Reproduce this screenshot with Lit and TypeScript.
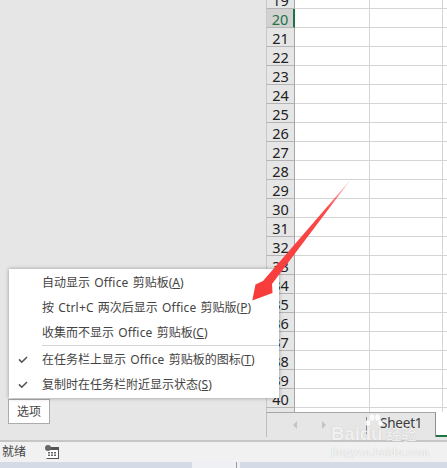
import { LitElement, html, css, svg } from "lit";
import { customElement } from "lit/decorators.js";

const rows = Array.from({ length: 22 }, (_, i) => 19 + i);

const items = [
  { pre: "自动显示 Office 剪贴板(", key: "A", check: false },
  { pre: "按 Ctrl+C 两次后显示 Office 剪贴版(", key: "P", check: false },
  { pre: "收集而不显示 Office 剪贴板(", key: "C", check: false },
  { sep: true },
  { pre: "在任务栏上显示 Office 剪贴板的图标(", key: "T", check: true },
  { pre: "复制时在任务栏附近显示状态(", key: "S", check: true },
];

const latin = (s: string) =>
  s.split(/([A-Za-z+]+)/).map((p, i) => (i % 2 ? html`<span class="lat">${p}</span>` : p));

const checkIcon = svg`<svg class="check" width="10" height="8" viewBox="0 0 10 8"><path d="M1 3.4 L3.8 6.2 L9 1" fill="none" stroke="#555" stroke-width="1.6"/></svg>`;

@customElement("app-root")
export class AppRoot extends LitElement {
  static styles = css`
    :host {
      display: block;
      width: 447px;
      height: 468px;
      position: relative;
      overflow: hidden;
      font-family: "Noto Sans", "Noto Sans CJK SC", sans-serif;
      font-size: 12px;
      color: #444;
      background: #e6e6e6;
    }
    .main {
      display: flex;
      height: 440px;
      overflow: hidden;
    }
    .pane {
      width: 266px;
      flex: none;
      box-sizing: border-box;
      background: #e6e6e6;
      padding: 399px 0 0 8px;
    }
    .options {
      width: 42px;
      height: 25px;
      box-sizing: border-box;
      border: 1px solid #ababab;
      background: #fff;
      display: flex;
      align-items: center;
      justify-content: center;
      line-height: 1;
    }
    .right {
      flex: 1;
      min-width: 0;
      display: flex;
      flex-direction: column;
    }
    .grid {
      height: 412px;
      overflow: hidden;
      flex: none;
      background: #fff;
    }
    .sheet {
      margin-top: -10px;
    }
    .row {
      display: flex;
      height: 19px;
      box-sizing: border-box;
    }
    .head {
      width: 29px;
      flex: none;
      box-sizing: border-box;
      background: #e6e6e6;
      border-left: 1px solid #c9c9c9;
      border-right: 1px solid #a6a6a6;
      border-bottom: 1px solid #b4b4b4;
      font-family: "Noto Sans", sans-serif;
      font-size: 14.5px;
      line-height: 19px;
      padding-top: 1px;
      color: #222;
      text-align: center;
    }
    .row.sel .head {
      background: #d2d2d2;
      color: #217346;
      border-right: 2px solid #217346;
    }
    .cell {
      box-sizing: border-box;
      border-right: 1px solid #d4d4d4;
      border-bottom: 1px solid #d4d4d4;
    }
    .c1 { width: 75px; flex: none; }
    .c2 { width: 73px; flex: none; }
    .c3 { flex: 1; border-right: none; }
    .tabs {
      height: 28px;
      box-sizing: border-box;
      display: flex;
      background: #e6e6e6;
    }
    .tabs-left {
      width: 170px;
      flex: none;
      box-sizing: border-box;
      border-top: 1px solid #a6a6a6;
      border-left: 1px solid #bdbdbd;
      border-right: 1px solid #8f8f8f;
      height: 25px;
      display: flex;
      align-items: center;
      padding-left: 25px;
    }
    .nav { width: 29px; flex: none; display: flex; }
    .divider {
      width: 1px;
      height: 17px;
      background: #888;
      margin-left: 16px;
      margin-right: 13px;
      flex: none;
    }
    .tab-name {
      font-family: "Noto Sans", sans-serif;
      font-size: 13.5px;
      letter-spacing: -0.2px;
      color: #3c3c3c;
      line-height: 1;
      margin-top: -2px;
    }
    .tabs-right {
      flex: 1;
      height: 25px;
      background: #fff;
      box-sizing: border-box;
      border-bottom: 2px solid #217346;
    }
    .status {
      height: 22px;
      box-sizing: border-box;
      border-top: 2px solid #c6c6c6;
      background: #f1f1f1;
      display: flex;
      align-items: center;
      padding-left: 2px;
      gap: 19px;
      line-height: 1;
    }
    .taskbar {
      height: 6px;
      display: flex;
      background: #d5dbe6;
    }
    .tb-a { width: 192px; flex: none; }
    .tb-b { width: 44px; flex: none; background: #eef0f4; }
    .tb-c { width: 1px; flex: none; background: #9a9a9a; }
    .tb-d { width: 3px; flex: none; background: #eef0f4; }
    .popup {
      position: absolute;
      left: 9px;
      top: 269px;
      width: 270px;
      height: 129px;
      box-sizing: border-box;
      padding-top: 1px;
      background: #fff;
      box-shadow: 0 0 4px rgba(0, 0, 0, 0.35);
    }
    .item {
      height: 25px;
      display: flex;
      align-items: center;
      padding-left: 33px;
      position: relative;
      white-space: nowrap;
      line-height: 1;
      word-spacing: 1px;
    }
    .lat { letter-spacing: 0.2px; }
    .check { position: absolute; left: 9px; top: 8px; }
    .sep {
      height: 1px;
      background: #d4d4d4;
      margin: 0 0 1.5px 33px;
    }
    .arrow {
      position: absolute;
      left: 0;
      top: 0;
      pointer-events: none;
    }
    .wm {
      position: absolute;
      left: 331px;
      top: 424px;
      color: rgba(255, 255, 255, 0.82);
      text-shadow: 0 0 1px rgba(0, 0, 0, 0.22);
      pointer-events: none;
      white-space: nowrap;
    }
    .wm-top {
      display: flex;
      align-items: baseline;
      font-family: "Liberation Sans", sans-serif;
      font-weight: 700;
      font-size: 18.5px;
      line-height: 20px;
    }
    .wm-cn {
      font-family: "Noto Sans CJK SC", sans-serif;
      font-weight: 500;
      font-size: 15px;
      margin-left: 4px;
    }
    .wm-sub {
      font-family: "Liberation Sans", sans-serif;
      font-weight: 700;
      font-size: 10.8px;
      line-height: 12px;
      margin-top: 2px;
      letter-spacing: 0.2px;
    }
    .paw {
      position: absolute;
      left: 34px;
      top: -10px;
    }
  `;

  render() {
    return html`
      <div class="main">
        <div class="pane">
          <div class="options">选项</div>
        </div>
        <div class="right">
          <div class="grid">
            <div class="sheet">
              ${rows.map(
                (n) => html`<div class="row ${n === 20 ? "sel" : ""}">
                  <div class="head">${n}</div>
                  <div class="cell c1"></div>
                  <div class="cell c2"></div>
                  <div class="cell c3"></div>
                </div>`
              )}
              <div class="row">
                <div class="head"></div>
                <div class="cell c1"></div>
                <div class="cell c2"></div>
                <div class="cell c3"></div>
              </div>
            </div>
          </div>
          <div class="tabs">
            <div class="tabs-left">
              <div class="nav">
                <svg width="6" height="10" viewBox="0 0 6 10"><path d="M5 1 L1 5 L5 9 Z" fill="#c4c4c4"/></svg>
              </div>
              <div class="nav">
                <svg width="6" height="10" viewBox="0 0 6 10"><path d="M1 1 L5 5 L1 9 Z" fill="#c4c4c4"/></svg>
              </div>
              <div class="divider"></div>
              <span class="tab-name">Sheet1</span>
            </div>
            <div class="tabs-right"></div>
          </div>
        </div>
      </div>
      <div class="status">
        <span>就绪</span>
        <svg width="14" height="14" viewBox="0 0 14 14">
          <rect x="1.5" y="2" width="12" height="12" fill="#fff"/>
          <rect x="1.5" y="2" width="12" height="3" fill="#555"/>
          <rect x="1.5" y="13" width="12" height="1" fill="#555"/>
          <rect x="13" y="2" width="1" height="12" fill="#555"/>
          <circle cx="3" cy="3" r="3" fill="#666"/>
          <path d="M3 7h2v1.4H3zM6 7h2v1.4H6zM9 7h2v1.4H9zM3 9.6h2V11H3zM6 9.6h2V11H6zM9 9.6h2V11H9z" fill="#666"/>
        </svg>
      </div>
      <div class="taskbar">
        <div class="tb-a"></div>
        <div class="tb-b"></div>
        <div class="tb-c"></div>
        <div class="tb-d"></div>
      </div>

      <div class="wm">
        <div class="wm-top">Baidu<span class="wm-cn">经验</span></div>
        <div class="wm-sub">jingyan.baidu.com</div>
        <svg class="paw" width="18" height="16" viewBox="0 0 18 16" fill="rgba(255,255,255,0.85)">
          <ellipse cx="3" cy="9" rx="2.4" ry="3"/>
          <ellipse cx="7" cy="3.5" rx="2.4" ry="3.2"/>
          <ellipse cx="12.5" cy="3.5" rx="2.4" ry="3.2"/>
          <ellipse cx="15.5" cy="9" rx="2.2" ry="2.8"/>
        </svg>
      </div>

      <div class="popup">
        ${items.map((it) =>
          it.sep
            ? html`<div class="sep"></div>`
            : html`<div class="item">
                ${it.check ? checkIcon : ""}
                <span>${latin(it.pre!)}<u>${it.key}</u>)</span>
              </div>`
        )}
      </div>

      <svg class="arrow" width="447" height="468" viewBox="0 0 447 468">
        <defs>
          <linearGradient id="ag" gradientUnits="userSpaceOnUse" x1="352" y1="178" x2="252" y2="301">
            <stop offset="0" stop-color="#ff3b3b" stop-opacity="0.15"/>
            <stop offset="0.25" stop-color="#fb3f3f" stop-opacity="0.95"/>
            <stop offset="1" stop-color="#f73a3a"/>
          </linearGradient>
        </defs>
        <path d="M252.3 300.5 L255.5 284.5 L263 281 L352 178 L272 284 L272.5 293 Z" fill="url(#ag)"/>
      </svg>
    `;
  }
}
